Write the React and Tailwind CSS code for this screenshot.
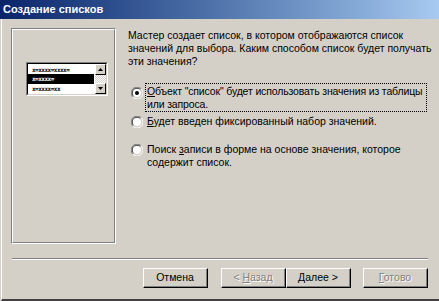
import React from "react";

function Radio({ checked }) {
  return (
    <svg width="12" height="12" viewBox="0 0 12 12" className="shrink-0">
      <path d="M10.2 1.8 A5.5 5.5 0 0 0 1.8 10.2" stroke="#808080" strokeWidth="1" fill="none" />
      <path d="M9.4 2.6 A4.5 4.5 0 0 0 2.6 9.4" stroke="#404040" strokeWidth="1" fill="none" />
      <path d="M1.8 10.2 A5.5 5.5 0 0 0 10.2 1.8" stroke="#ffffff" strokeWidth="1" fill="none" />
      <path d="M2.6 9.4 A4.5 4.5 0 0 0 9.4 2.6" stroke="#d4d0c8" strokeWidth="1" fill="none" />
      <circle cx="6" cy="6" r="4" fill="#ffffff" />
      {checked && <circle cx="6" cy="6" r="2" fill="#000000" />}
    </svg>
  );
}

function Button({ children, disabled }) {
  return (
    <div className="w-[65px] h-[20px] border border-t-white border-l-white border-r-black border-b-black">
      <div className="w-full h-full flex items-center justify-center border-r border-b border-[#808080]">
        <span
          className={
            disabled
              ? "text-[#808080] [text-shadow:1px_1px_0_#ffffff]"
              : "text-black"
          }
        >
          {children}
        </span>
      </div>
    </div>
  );
}

function MiniList() {
  return (
    <div className="w-[82px] h-[34px] border border-t-[#808080] border-l-[#808080] border-r-white border-b-white">
      <div className="w-full h-full flex bg-white border border-t-black border-l-black border-r-[#d4d0c8] border-b-[#d4d0c8]">
        <div className="flex-1 flex flex-col pt-px font-['DejaVu_Sans_Mono',monospace] text-[6px] font-bold leading-[10px] tracking-[-0.5px]">
          <div className="pl-[4px] h-[9px]">x=xxxx=xxxx=</div>
          <div className="pl-[4px] h-[10px] bg-black text-white mr-px">x=xxxx=</div>
          <div className="pl-[4px] h-[9px]">x=xxxx=xx</div>
        </div>
        <div className="w-[11px] flex flex-col bg-[repeating-conic-gradient(#ffffff_0_25%,#d4d0c8_0_50%)] bg-[length:2px_2px]">
          <div className="h-[11px] bg-[#d4d0c8] border border-t-white border-l-white border-r-black border-b-black flex items-center justify-center">
            <svg width="5" height="3" viewBox="0 0 5 3"><path d="M2.5 0 L5 3 L0 3 Z" fill="#000" /></svg>
          </div>
          <div className="flex-1" />
          <div className="h-[11px] bg-[#d4d0c8] border border-t-white border-l-white border-r-black border-b-black flex items-center justify-center">
            <svg width="5" height="3" viewBox="0 0 5 3"><path d="M0 0 L5 0 L2.5 3 Z" fill="#000" /></svg>
          </div>
        </div>
      </div>
    </div>
  );
}

export default function App() {
  return (
    <div className="w-[439px] h-[301px] bg-[#d4d0c8] flex flex-col font-['Liberation_Sans',Arial,sans-serif] text-[10.5px] text-black overflow-hidden">
      {/* title bar */}
      <div className="h-[19px] shrink-0 flex items-center pl-[3px] bg-gradient-to-r from-[#0a246a] to-[#a6caf0]">
        <span className="text-white font-bold text-[11px]">Создание списков</span>
      </div>

      <div className="flex-1 flex flex-col ml-px border-l border-white border-b-2 border-b-[#404040]">
        <div className="flex pt-[9px] pl-[9px]">
          {/* left picture panel */}
          <div className="w-[105px] h-[216px] shrink-0 border border-t-[#808080] border-l-[#808080] border-r-white border-b-white">
            <div className="w-full h-full border border-t-white border-l-white border-r-[#808080] border-b-[#808080] pt-[32px] pl-[13px]">
              <MiniList />
            </div>
          </div>

          {/* right text */}
          <div className="flex flex-col pl-[12px] pt-[1px] whitespace-nowrap">
            <div className="leading-[13px]">
              <div>Мастер создает список, в котором отображаются список</div>
              <div>значений для выбора. Каким способом список будет получать</div>
              <div>эти значения?</div>
            </div>

            <div className="flex flex-col mt-[15px]">
              <div className="flex items-start">
                <div className="pt-[4px] pl-[3px]"><Radio checked /></div>
                <div className="ml-[2px] w-[282px] h-[29px] border border-dotted border-black px-[1px] pt-[1px] leading-[13px] tracking-[-0.15px]">
                  <div><span className="underline">О</span>бъект "список" будет использовать значения из таблицы</div>
                  <div>или запроса.</div>
                </div>
              </div>
              <div className="flex items-start mt-[3px]">
                <div className="pt-[1px] pl-[3px]"><Radio /></div>
                <div className="ml-[4px] leading-[13px]">
                  <span className="underline">Б</span>удет введен фиксированный набор значений.
                </div>
              </div>
              <div className="flex items-start mt-[15px]">
                <div className="pt-[1px] pl-[3px]"><Radio /></div>
                <div className="ml-[4px] leading-[13px]">
                  <div>Поиск <span className="underline">з</span>аписи в форме на основе значения, которое</div>
                  <div>содержит список.</div>
                </div>
              </div>
            </div>
          </div>
        </div>

        {/* separator */}
        <div className="mt-[14px] ml-[10px] mr-[11px] h-[2px] border-t border-t-[#808080] border-b border-b-white" />

        {/* buttons */}
        <div className="flex justify-end mt-[8px] pr-[11px] text-[10.5px]">
          <Button>Отмена</Button>
          <div className="w-[13px]" />
          <Button disabled>&lt; <span className="underline">Н</span>азад</Button>
          <Button><span className="underline">Д</span>алее &gt;</Button>
          <div className="w-[12px]" />
          <Button disabled><span className="underline">Г</span>отово</Button>
        </div>
      </div>
    </div>
  );
}
